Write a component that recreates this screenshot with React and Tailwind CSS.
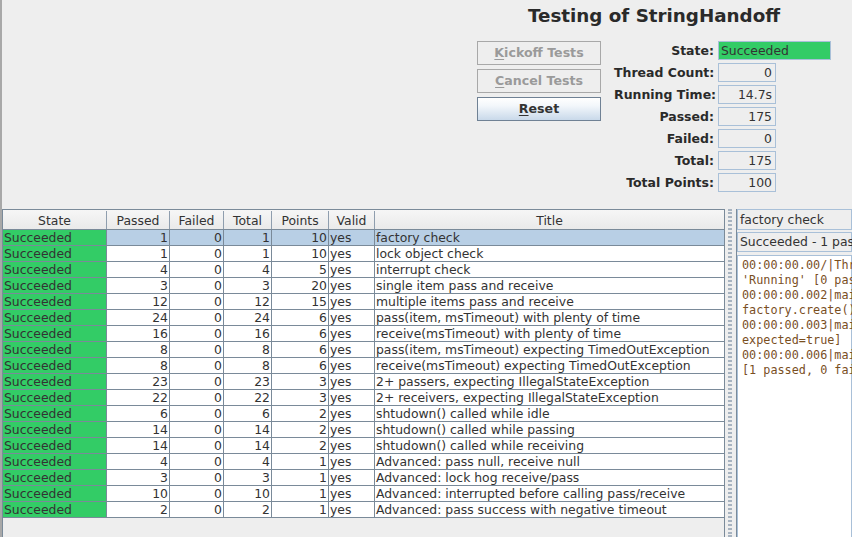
import React from "react";

const rows = [
  [1, 0, 1, 10, "factory check"],
  [1, 0, 1, 10, "lock object check"],
  [4, 0, 4, 5, "interrupt check"],
  [3, 0, 3, 20, "single item pass and receive"],
  [12, 0, 12, 15, "multiple items pass and receive"],
  [24, 0, 24, 6, "pass(item, msTimeout) with plenty of time"],
  [16, 0, 16, 6, "receive(msTimeout) with plenty of time"],
  [8, 0, 8, 6, "pass(item, msTimeout) expecting TimedOutException"],
  [8, 0, 8, 6, "receive(msTimeout) expecting TimedOutException"],
  [23, 0, 23, 3, "2+ passers, expecting IllegalStateException"],
  [22, 0, 22, 3, "2+ receivers, expecting IllegalStateException"],
  [6, 0, 6, 2, "shtudown() called while idle"],
  [14, 0, 14, 2, "shtudown() called while passing"],
  [14, 0, 14, 2, "shtudown() called while receiving"],
  [4, 0, 4, 1, "Advanced: pass null, receive null"],
  [3, 0, 3, 1, "Advanced: lock hog receive/pass"],
  [10, 0, 10, 1, "Advanced: interrupted before calling pass/receive"],
  [2, 0, 2, 1, "Advanced: pass success with negative timeout"],
];

const fields = [
  ["State:", "Succeeded", true],
  ["Thread Count:", "0"],
  ["Running Time:", "14.7s"],
  ["Passed:", "175"],
  ["Failed:", "0"],
  ["Total:", "175"],
  ["Total Points:", "100"],
];

const logLines = [
  "00:00:00.00/|Thread-main|state changed to",
  "'Running' [0 passed, 0 failed]",
  "00:00:00.002|main|calling",
  "factory.create()",
  "00:00:00.003|main|[result:",
  "expected=true]",
  "00:00:00.006|main|Succeeded",
  "[1 passed, 0 failed]",
];

function Btn({ first, rest, enabled }) {
  return (
    <div
      className={
        enabled
          ? "h-[24px] flex items-center justify-center border border-[#6f8194] bg-[linear-gradient(to_bottom,#ffffff_0%,#f3f7fb_35%,#c9d9ea_100%)] font-bold text-[12.6px] text-[#333333]"
          : "h-[24px] flex items-center justify-center border border-[#a8a8a8] bg-[#eeeeee] font-bold text-[12.6px] text-[#9a9a9a]"
      }
    >
      <span>
        <span className="underline underline-offset-2">{first}</span>
        {rest}
      </span>
    </div>
  );
}

export default function App() {
  return (
    <div
      className="w-[852px] h-[537px] bg-[#eeeeee] flex flex-col overflow-hidden border-l-2 border-[#a8a8a8] text-[#333333]"
      style={{ fontFamily: '"DejaVu Sans", sans-serif' }}
    >
      {/* Top area */}
      <div className="h-[209px] flex justify-end pr-[21px] shrink-0">
        <div className="w-[354px] flex flex-col">
          <div className="mt-[5px] h-[22px] leading-[22px] text-center font-bold text-[18.3px] text-[#2a2a2a] whitespace-nowrap">
            Testing of StringHandoff
          </div>
          <div className="mt-[14px] flex">
            <div className="w-[124px] flex flex-col gap-[4px]">
              <Btn first="K" rest="ickoff Tests" />
              <Btn first="C" rest="ancel Tests" />
              <Btn first="R" rest="eset" enabled />
            </div>
            <div className="ml-[13px] flex flex-col gap-[3px]">
              {fields.map(([label, value, green]) => (
                <div key={label} className="flex items-center h-[19px]">
                  <div className="w-[100px] text-right font-bold text-[12.5px] leading-[19px] text-[#2a2a2a] whitespace-nowrap">
                    {label}
                  </div>
                  <div
                    className={
                      green
                        ? "ml-[4px] w-[113px] h-[19px] border border-[#a9c0d8] bg-[#33cc66] text-[12.4px] leading-[17px] pl-[2px]"
                        : "ml-[4px] w-[58px] h-[19px] border border-[#a9c0d8] bg-[#eeeeee] text-[12.4px] leading-[17px] text-right pr-[3px]"
                    }
                  >
                    {value}
                  </div>
                </div>
              ))}
            </div>
          </div>
        </div>
      </div>

      {/* Bottom area */}
      <div className="flex-1 flex min-h-0">
        {/* Table pane */}
        <div className="w-[723px] shrink-0 border border-b-0 border-[#7a8a99] bg-[#eeeeee] flex flex-col text-[12.4px]">
          <div className="flex h-[20px] border-b border-[#7a8a99] bg-[linear-gradient(to_bottom,#f6f6f6,#eaeaea)] leading-[19px] pt-[1px] text-center">
            <div className="w-[104px] border-r border-[#8f9eae]">State</div>
            <div className="w-[63px] border-r border-[#8f9eae]">Passed</div>
            <div className="w-[54px] border-r border-[#8f9eae]">Failed</div>
            <div className="w-[48px] border-r border-[#8f9eae]">Total</div>
            <div className="w-[57px] border-r border-[#8f9eae]">Points</div>
            <div className="w-[46px] border-r border-[#8f9eae]">Valid</div>
            <div className="flex-1">Title</div>
          </div>
          {rows.map((r, i) => {
            const sel = i === 0;
            const bg = sel ? "bg-[#b8cfe5]" : "bg-white";
            return (
              <div key={i} className="flex h-[16px] border-b border-[#7a8a99] leading-[15px] whitespace-nowrap">
                <div className="w-[104px] border-r border-[#7a8a99] bg-[#33cc66] pl-[1px]">Succeeded</div>
                <div className={`w-[63px] border-r border-[#7a8a99] text-right pr-[1px] ${bg}`}>{r[0]}</div>
                <div className={`w-[54px] border-r border-[#7a8a99] text-right pr-[1px] ${bg}`}>{r[1]}</div>
                <div className={`w-[48px] border-r border-[#7a8a99] text-right pr-[1px] ${bg}`}>{r[2]}</div>
                <div className={`w-[57px] border-r border-[#7a8a99] text-right pr-[1px] ${bg}`}>{r[3]}</div>
                <div className={`w-[46px] border-r border-[#7a8a99] pl-[1px] ${bg}`}>yes</div>
                <div className={`flex-1 pl-[1px] ${bg}`}>{r[4]}</div>
              </div>
            );
          })}
        </div>

        {/* Splitter */}
        <div className="w-[11px] shrink-0 flex pl-[3px]">
          <div className="w-[4px] border-x-2 border-dotted border-[#a7b3c0]" />
        </div>

        {/* Right panel */}
        <div className="flex-1 min-w-0 border-l border-[#7a8a99] flex flex-col gap-[2px] text-[12.4px] overflow-hidden">
          <div className="h-[21px] border border-[#a9c0d8] bg-[#eeeeee] leading-[19px] pl-[2px] whitespace-nowrap">
            factory check
          </div>
          <div className="h-[20px] border border-[#a9c0d8] bg-[#eeeeee] leading-[18px] pl-[2px] whitespace-nowrap">
            Succeeded - 1 passed, 0 failed
          </div>
          <div
            className="flex-1 mt-[1px] border border-b-0 border-[#a9c0d8] bg-white pt-[2px] pl-[4px] text-[11.8px] leading-[15px] text-[#7a4f1f] whitespace-pre"
            style={{ fontFamily: '"DejaVu Sans Mono", monospace' }}
          >
            {logLines.map((l, i) => (
              <div key={i}>{l}</div>
            ))}
          </div>
        </div>
      </div>
    </div>
  );
}
